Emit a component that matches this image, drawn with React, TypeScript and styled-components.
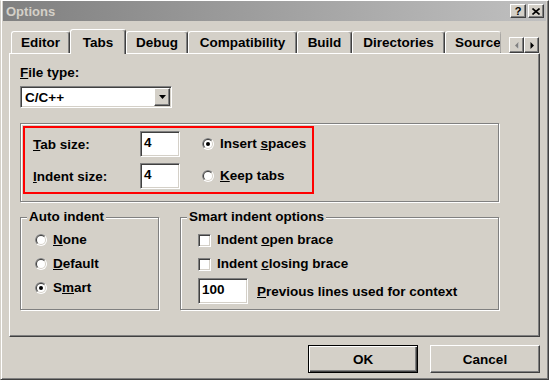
import React from 'react';
import styled, { createGlobalStyle } from 'styled-components';

const face = '#d4d0c8';
const shadow = '#808080';
const dark = '#404040';

const GlobalStyle = createGlobalStyle`
  html, body {
    margin: 0;
    padding: 0;
    background: ${face};
  }
  body {
    font-family: "Liberation Sans", Arial, sans-serif;
    font-size: 13.5px;
    font-weight: bold;
    color: #000;
  }
  * {
    box-sizing: border-box;
  }
`;

const Window = styled.div`
  width: 549px;
  height: 380px;
  display: flex;
  flex-direction: column;
  background: ${face};
  border: 1px solid;
  border-color: #fff ${dark} ${dark} ${face};
  box-shadow: inset 1px 0 #fff, inset -1px -1px ${shadow};
  padding: 0 2px 1px 2px;
`;

const TitleBar = styled.div`
  flex: none;
  height: 20px;
  display: flex;
  align-items: center;
  padding: 0 2px 0 3px;
  background: linear-gradient(to right, ${shadow}, #c0c0c0);
  color: ${face};
  font-size: 13px;
`;

const TitleText = styled.span`
  flex: 1;
`;

const CaptionButtons = styled.div`
  display: flex;
  gap: 2px;
`;

const Raised = `
  background: ${face};
  border: 1px solid;
  border-color: #fff ${dark} ${dark} #fff;
  box-shadow: inset -1px -1px ${shadow};
`;

const Sunken = `
  border: 1px solid;
  border-color: ${shadow} #fff #fff ${shadow};
  box-shadow: inset 1px 1px ${dark}, inset -1px -1px ${face};
`;

const CaptionButton = styled.div`
  ${Raised}
  width: 16px;
  height: 14px;
  display: flex;
  align-items: center;
  justify-content: center;
  color: #000;
  font-size: 11px;
  line-height: 12px;
`;

const Body = styled.div`
  flex: 1;
  display: flex;
  flex-direction: column;
  padding: 8px 6px 0;
`;

const TabStrip = styled.div`
  flex: none;
  height: 24px;
  display: flex;
  align-items: flex-end;
  padding-left: 2px;
`;

const Tab = styled.div<{ $w: number; $selected?: boolean; $cut?: boolean }>`
  flex: none;
  position: relative;
  z-index: ${p => (p.$selected ? 2 : 0)};
  width: ${p => p.$w}px;
  height: ${p => (p.$selected ? 25 : 22)}px;
  margin-bottom: ${p => (p.$selected ? -1 : 0)}px;
  display: flex;
  align-items: center;
  justify-content: ${p => (p.$cut ? 'flex-start' : 'center')};
  padding-left: ${p => (p.$cut ? 9 : 0)}px;
  background: ${face};
  border-top: 1px solid #fff;
  border-left: 1px solid #fff;
  border-right: 1px ${p => (p.$cut ? `dotted ${shadow}` : `solid ${dark}`)};
  border-radius: 3px 3px 0 0;
  box-shadow: ${p => (p.$cut ? 'none' : `inset -1px 0 ${shadow}`)};
  white-space: nowrap;
  overflow: hidden;
`;

const ScrollButtons = styled.div`
  flex: none;
  display: flex;
  margin-left: auto;
  margin-right: 1px;
`;

const ScrollButton = styled.div`
  ${Raised}
  width: 15px;
  height: 16px;
  display: flex;
  align-items: center;
  justify-content: center;
`;

const Panel = styled.div`
  flex: none;
  height: 284px;
  display: flex;
  flex-direction: column;
  align-items: flex-start;
  padding: 11px 0 0 10px;
  border: 1px solid;
  border-color: #fff ${dark} ${dark} #fff;
  box-shadow: inset -1px -1px ${shadow};
`;

const FieldLabel = styled.div`
  line-height: 16px;
`;

const Select = styled.div`
  ${Sunken}
  margin-top: 5px;
  width: 152px;
  height: 22px;
  display: flex;
  align-items: center;
  background: #fff;
  padding: 1px 1px 1px 4px;
`;

const SelectValue = styled.span`
  flex: 1;
`;

const DropButton = styled.div`
  ${Raised}
  width: 16px;
  height: 18px;
  display: flex;
  align-items: center;
  justify-content: center;
`;

const Group = styled.div<{ $w: number; $h: number }>`
  position: relative;
  flex: none;
  width: ${p => p.$w}px;
  height: ${p => p.$h}px;
  border: 1px solid ${shadow};
  box-shadow: inset 1px 1px #fff, 1px 1px #fff;
`;

const Legend = styled.span`
  position: absolute;
  top: -9px;
  left: 6px;
  padding: 0 2px;
  line-height: 16px;
  background: ${face};
`;

const SizeGroup = styled(Group)`
  margin-top: 15px;
  padding: 2px;
`;

const Highlight = styled.div`
  width: 291px;
  height: 68px;
  border: 2px solid #ff0000;
  padding: 3px 0 0 8px;
  display: grid;
  grid-template-columns: 107px 40px auto;
  grid-auto-rows: 26px;
  row-gap: 6px;
  align-items: center;
`;

const NumberBox = styled.div<{ $w: number }>`
  ${Sunken}
  width: ${p => p.$w}px;
  height: 26px;
  background: #fff;
  padding: 3px 3px 0;
  line-height: 16px;
`;

const Choice = styled.label<{ $indent?: number }>`
  display: flex;
  align-items: center;
  gap: 6px;
  margin-left: ${p => p.$indent ?? 0}px;
  line-height: 16px;
`;

const RadioSvg = styled.svg`
  flex: none;
  display: block;
`;

const CheckBox = styled.span`
  ${Sunken}
  flex: none;
  width: 13px;
  height: 13px;
  background: #fff;
`;

const GroupRow = styled.div`
  margin-top: 15px;
  display: flex;
  gap: 21px;
`;

const OptionList = styled.div<{ $left: number }>`
  display: flex;
  flex-direction: column;
  gap: 8px;
  padding: 14px 0 0 ${p => p.$left}px;
`;

const ContextRow = styled.div`
  display: flex;
  align-items: center;
  margin-top: -2px;
`;

const ContextLabel = styled.span`
  margin-left: 9px;
`;

const ButtonRow = styled.div`
  margin-top: 8px;
  display: flex;
  justify-content: flex-end;
  gap: 12px;
`;

const DialogButton = styled.div<{ $default?: boolean }>`
  width: 110px;
  height: 28px;
  display: flex;
  align-items: center;
  justify-content: center;
  background: ${face};
  border: 1px solid;
  border-color: ${p => (p.$default ? '#000' : `#fff ${dark} ${dark} #fff`)};
  box-shadow: ${p =>
    p.$default
      ? `inset 1px 1px #fff, inset -1px -1px ${dark}, inset -2px -2px ${shadow}`
      : `inset -1px -1px ${shadow}`};
`;

const Radio = ({ checked }: { checked?: boolean }) => (
  <RadioSvg width="12" height="12" viewBox="0 0 12 12">
    <circle cx="6" cy="6" r="6" fill="#fff" />
    <path d="M1.757 10.243A6 6 0 0 1 10.243 1.757Z" fill={shadow} />
    <circle cx="6" cy="6" r="5" fill={face} />
    <path d="M2.464 9.536A5 5 0 0 1 9.536 2.464Z" fill={dark} />
    <circle cx="6" cy="6" r="4" fill="#fff" />
    {checked && <circle cx="6" cy="6" r="2" fill="#000" />}
  </RadioSvg>
);

const tabs = [
  { name: 'Editor', w: 59 },
  { name: 'Tabs', w: 56, selected: true },
  { name: 'Debug', w: 62 },
  { name: 'Compatibility', w: 109 },
  { name: 'Build', w: 55 },
  { name: 'Directories', w: 93 },
  { name: 'Source', w: 56, cut: true },
];

export default function App() {
  return (
    <>
      <GlobalStyle />
      <Window>
        <TitleBar>
          <TitleText>Options</TitleText>
          <CaptionButtons>
            <CaptionButton>?</CaptionButton>
            <CaptionButton>
              <svg width="8" height="7" viewBox="0 0 8 7">
                <path d="M0.5 0.5L7.5 6.5M7.5 0.5L0.5 6.5" stroke="#000" strokeWidth="1.6" />
              </svg>
            </CaptionButton>
          </CaptionButtons>
        </TitleBar>

        <Body>
          <TabStrip>
            {tabs.map(t => (
              <Tab key={t.name} $w={t.w} $selected={t.selected} $cut={t.cut}>
                {t.name}
              </Tab>
            ))}
            <ScrollButtons>
              <ScrollButton>
                <svg width="4" height="7" viewBox="0 0 4 7">
                  <polygon points="4,0.5 4,7.5 1,4" fill="#fff" />
                  <polygon points="3.5,0 3.5,7 0,3.5" fill={shadow} />
                </svg>
              </ScrollButton>
              <ScrollButton>
                <svg width="4" height="7" viewBox="0 0 4 7">
                  <polygon points="0.5,0 0.5,7 4,3.5" fill="#000" />
                </svg>
              </ScrollButton>
            </ScrollButtons>
          </TabStrip>

          <Panel>
            <FieldLabel>
              <u>F</u>ile type:
            </FieldLabel>
            <Select>
              <SelectValue>C/C++</SelectValue>
              <DropButton>
                <svg width="7" height="4" viewBox="0 0 7 4">
                  <polygon points="0,0 7,0 3.5,4" fill="#000" />
                </svg>
              </DropButton>
            </Select>

            <SizeGroup $w={479} $h={79}>
              <Highlight>
                <span>
                  <u>T</u>ab size:
                </span>
                <NumberBox $w={40}>4</NumberBox>
                <Choice $indent={22}>
                  <Radio checked />
                  <span>
                    Insert <u>s</u>paces
                  </span>
                </Choice>
                <span>
                  <u>I</u>ndent size:
                </span>
                <NumberBox $w={40}>4</NumberBox>
                <Choice $indent={22}>
                  <Radio />
                  <span>
                    <u>K</u>eep tabs
                  </span>
                </Choice>
              </Highlight>
            </SizeGroup>

            <GroupRow>
              <Group $w={139} $h={93}>
                <Legend>Auto indent</Legend>
                <OptionList $left={14}>
                  <Choice>
                    <Radio />
                    <span>
                      <u>N</u>one
                    </span>
                  </Choice>
                  <Choice>
                    <Radio />
                    <span>
                      <u>D</u>efault
                    </span>
                  </Choice>
                  <Choice>
                    <Radio checked />
                    <span>
                      S<u>m</u>art
                    </span>
                  </Choice>
                </OptionList>
              </Group>

              <Group $w={319} $h={93}>
                <Legend>Smart indent options</Legend>
                <OptionList $left={17}>
                  <Choice>
                    <CheckBox />
                    <span>
                      Indent <u>o</u>pen brace
                    </span>
                  </Choice>
                  <Choice>
                    <CheckBox />
                    <span>
                      Indent <u>c</u>losing brace
                    </span>
                  </Choice>
                  <ContextRow>
                    <NumberBox $w={50}>100</NumberBox>
                    <ContextLabel>
                      <u>P</u>revious lines used for context
                    </ContextLabel>
                  </ContextRow>
                </OptionList>
              </Group>
            </GroupRow>
          </Panel>

          <ButtonRow>
            <DialogButton $default>OK</DialogButton>
            <DialogButton>Cancel</DialogButton>
          </ButtonRow>
        </Body>
      </Window>
    </>
  );
}
